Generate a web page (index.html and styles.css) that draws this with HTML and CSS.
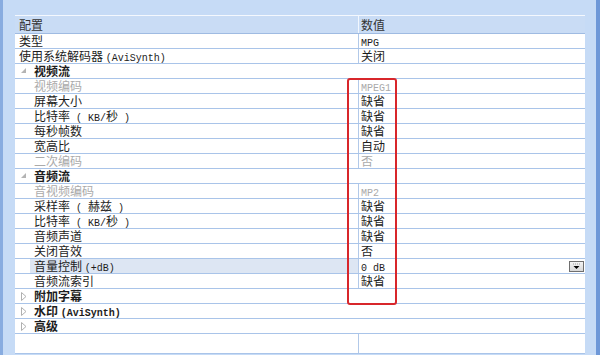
FILE: index.html
```html
<!DOCTYPE html>
<html lang="zh-CN">
  <head>
    <meta charset="UTF-8" />
    <title>配置</title>
    <link rel="stylesheet" href="styles.css">
  </head>
  <body>
    <div class="window">
      <div class="grid">
        <div class="row head">
          <div class="name">配置</div>
          <div class="value">数值</div>
        </div>

        <div class="row">
          <div class="name">类型</div>
          <div class="value"><span class="lat">MPG</span></div>
        </div>
        <div class="row">
          <div class="name">使用系统解码器 <span class="lat">(AviSynth)</span></div>
          <div class="value">关闭</div>
        </div>

        <div class="row cat">
          <span class="gutter">
            <svg width="6" height="6" viewBox="0 0 6 6"><polygon points="5,0 5,5 0,5" fill="#b4b4b4" /></svg>
          </span>
          <div class="name">视频流</div>
        </div>
        <div class="row">
          <span class="gutter"></span>
          <div class="name off">视频编码</div>
          <div class="value off"><span class="lat">MPEG1</span></div>
        </div>
        <div class="row">
          <span class="gutter"></span>
          <div class="name">屏幕大小</div>
          <div class="value">缺省</div>
        </div>
        <div class="row">
          <span class="gutter"></span>
          <div class="name">比特率<span class="lat"> ( KB/</span>秒<span class="lat"> )</span></div>
          <div class="value">缺省</div>
        </div>
        <div class="row">
          <span class="gutter"></span>
          <div class="name">每秒帧数</div>
          <div class="value">缺省</div>
        </div>
        <div class="row">
          <span class="gutter"></span>
          <div class="name">宽高比</div>
          <div class="value">自动</div>
        </div>
        <div class="row">
          <span class="gutter"></span>
          <div class="name off">二次编码</div>
          <div class="value off">否</div>
        </div>

        <div class="row cat">
          <span class="gutter">
            <svg width="6" height="6" viewBox="0 0 6 6"><polygon points="5,0 5,5 0,5" fill="#b4b4b4" /></svg>
          </span>
          <div class="name">音频流</div>
        </div>
        <div class="row">
          <span class="gutter"></span>
          <div class="name off">音视频编码</div>
          <div class="value off"><span class="lat">MP2</span></div>
        </div>
        <div class="row">
          <span class="gutter"></span>
          <div class="name">采样率<span class="lat"> ( </span>赫兹<span class="lat"> )</span></div>
          <div class="value">缺省</div>
        </div>
        <div class="row">
          <span class="gutter"></span>
          <div class="name">比特率<span class="lat"> ( KB/</span>秒<span class="lat"> )</span></div>
          <div class="value">缺省</div>
        </div>
        <div class="row">
          <span class="gutter"></span>
          <div class="name">音频声道</div>
          <div class="value">缺省</div>
        </div>
        <div class="row">
          <span class="gutter"></span>
          <div class="name">关闭音效</div>
          <div class="value">否</div>
        </div>
        <div class="row">
          <span class="gutter"></span>
          <div class="name selected">音量控制 <span class="lat">(+dB)</span></div>
          <div class="value">
            <span class="lat">0 dB</span>
            <span class="drop">
              <svg width="9" height="7" viewBox="0 0 9 7">
                <path d="M1 1h7" stroke="#9a9a9a" stroke-width="1" stroke-dasharray="1 1" />
                <polygon points="1.5,3 7.5,3 4.5,6" fill="#000" />
              </svg>
            </span>
          </div>
        </div>
        <div class="row">
          <span class="gutter"></span>
          <div class="name">音频流索引</div>
          <div class="value">缺省</div>
        </div>

        <div class="row cat">
          <span class="gutter">
            <svg width="6" height="9" viewBox="0 0 6 9"><polygon points="0.5,0.5 5,4.5 0.5,8.5" fill="none" stroke="#b0b0b0" /></svg>
          </span>
          <div class="name">附加字幕</div>
        </div>
        <div class="row cat">
          <span class="gutter">
            <svg width="6" height="9" viewBox="0 0 6 9"><polygon points="0.5,0.5 5,4.5 0.5,8.5" fill="none" stroke="#b0b0b0" /></svg>
          </span>
          <div class="name">水印 <span class="lat">(AviSynth)</span></div>
        </div>
        <div class="row cat">
          <span class="gutter">
            <svg width="6" height="9" viewBox="0 0 6 9"><polygon points="0.5,0.5 5,4.5 0.5,8.5" fill="none" stroke="#b0b0b0" /></svg>
          </span>
          <div class="name">高级</div>
        </div>

        <div class="row blank">
          <div class="name"></div>
          <div class="value"></div>
        </div>
      </div>

      <div class="mark"></div>
    </div>
  </body>
</html>
```

FILE: styles.css
```css
* {
  margin: 0;
  padding: 0;
  box-sizing: border-box;
}

body {
  width: 600px;
  height: 355px;
  overflow: hidden;
  font-family: "Noto Sans CJK SC", sans-serif;
  font-size: 12px;
  color: #1c1c1c;
}

.window {
  position: relative;
  width: 600px;
  height: 355px;
  background: #c6dbf6;
  border-left: 3px solid #88ace0;
  border-right: 4px solid #6e98d8;
  padding: 15px 0 0 12px;
}

.grid {
  width: 570px;
  background: #fff;
  border-top: 1px solid #f4f8fe;
}

.row {
  display: flex;
  height: 15px;
  line-height: 14px;
  border-bottom: 1px solid #a9c4e9;
  white-space: nowrap;
}

.row.head {
  height: 18px;
  line-height: 17px;
  background: #c9dcf5;
  border-bottom-color: #9fbbe2;
  color: #333;
}

.row.head .value {
  border-left: 1px solid #f2f7fe;
}

.gutter {
  flex: none;
  width: 15px;
  display: flex;
  align-items: center;
  justify-content: center;
  padding-left: 2px;
}

.name {
  flex: 1;
  padding-left: 4px;
}

.name.selected {
  background: #dde6f3;
}

.value {
  flex: none;
  position: relative;
  width: 227px;
  padding-left: 2px;
  border-left: 1px solid #b2c9e9;
}

.off {
  color: #aaa;
}

.cat .name {
  font-weight: 700;
}

.row.blank {
  height: 20px;
}

.lat {
  font-family: "Liberation Mono", monospace;
  font-size: 10px;
}

.drop {
  position: absolute;
  top: 2px;
  right: 1px;
  width: 15px;
  height: 11px;
  display: flex;
  align-items: center;
  justify-content: center;
  background: linear-gradient(#f4f4f4, #d8d8d8);
  border: 1px solid #6f6f6f;
}

.mark {
  position: absolute;
  left: 344px;
  top: 78px;
  width: 50px;
  height: 227px;
  border: 2px solid #d8262b;
  border-radius: 3px;
}
```
